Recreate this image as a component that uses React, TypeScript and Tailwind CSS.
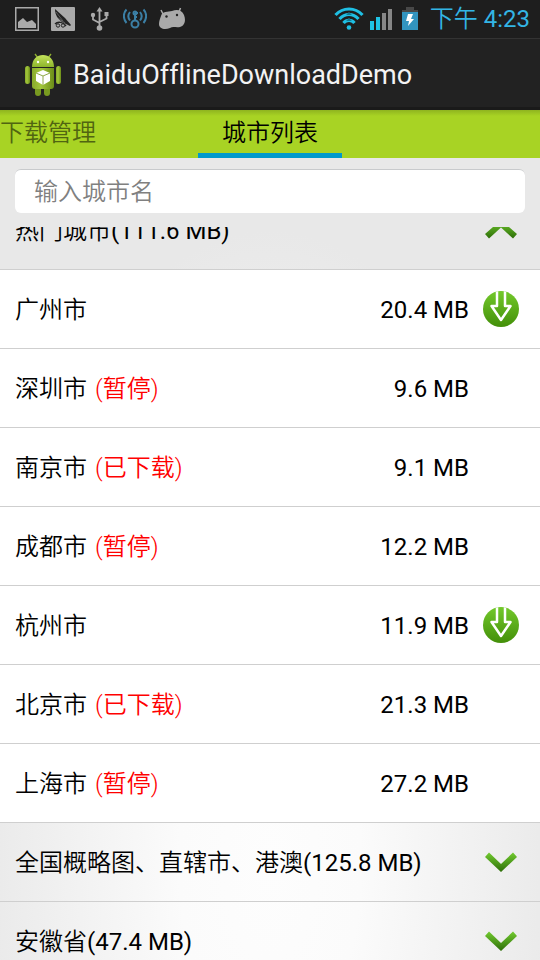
import { useState } from "react";

type City = { name: string; size: string; status?: string };

const cities: City[] = [
  { name: "广州市", size: "20.4 MB" },
  { name: "深圳市", size: "9.6 MB", status: "(暂停)" },
  { name: "南京市", size: "9.1 MB", status: "(已下载)" },
  { name: "成都市", size: "12.2 MB", status: "(暂停)" },
  { name: "杭州市", size: "11.9 MB" },
  { name: "北京市", size: "21.3 MB", status: "(已下载)" },
  { name: "上海市", size: "27.2 MB", status: "(暂停)" },
];

function NotificationIcons() {
  return (
    <div className="flex items-center gap-3" aria-hidden="true">
      <svg width="24" height="24" viewBox="0 0 24 24">
        <rect x="0.75" y="0.75" width="22.5" height="22.5" fill="none" stroke="#aaa" strokeWidth="1.5" />
        <path d="M3 21V15L8 11L12 15L17 13L21 17V21Z" fill="#aaa" />
      </svg>
      <svg width="24" height="24" viewBox="0 0 24 24">
        <rect width="24" height="24" rx="1" fill="#aaa" />
        <path d="M4 2C4 8 7 12 11 15L19 19L20 18L14 11Z" fill="#222" />
        <path d="M5 5L12 14M7 11L14 16" fill="none" stroke="#777" strokeWidth="0.7" />
        <path d="M4 17C7 14 12 15 15 19" fill="none" stroke="#222" strokeWidth="1.500" />
        <circle cx="7" cy="18.500" r="1.7" fill="#aaa" stroke="#222" />
        <circle cx="12" cy="18.500" r="1.7" fill="#aaa" stroke="#222" />
      </svg>
      <svg width="24" height="24" viewBox="0 0 24 24" fill="none" stroke="#aaa" strokeWidth="1.8">
        <path d="M12.500 3V20M6 9V12.500L12.500 16M19.500 7V11.500L12.500 15" />
        <path d="M12.500 0L15.500 4.500H9.500Z" fill="#aaa" stroke="none" />
        <circle cx="12.500" cy="21" r="2.800" fill="#aaa" stroke="none" />
        <circle cx="6" cy="8" r="2.200" fill="#aaa" stroke="none" />
        <rect x="17.500" y="5" width="4" height="4" fill="#aaa" stroke="none" />
      </svg>
      <svg width="24" height="24" viewBox="0 0 24 24" fill="none" stroke="#3b7fa5" strokeWidth="2">
        <circle cx="12" cy="17" r="3.500" />
        <path d="M12 14V6M12 6H15M12 10H14" />
        <circle cx="12" cy="6" r="1.500" />
        <path d="M7 5C5 7.500 5 11 7 13.500M17 5C19 7.500 19 11 17 13.500M3.500 2.500C0 6 0 12 3.500 16M20.500 2.500C24 6 24 12 20.500 16" />
      </svg>
      <svg width="26" height="24" viewBox="0 0 26 24">
        <path d="M2 3L4 7M21.500 1L20 5" stroke="#aaa" strokeWidth="1.500" />
        <path d="M2 9C3 4 9 5 13 4C18 2 23 3 25 8C27 13 26 19 21 20C17 21 14 19 11 21C6 23 0 22 0 17C0 14 1 12 2 9Z" fill="#aaa" />
        <circle cx="7.500" cy="9.500" r="1.200" fill="#222" />
        <circle cx="18" cy="8" r="1.200" fill="#222" />
      </svg>
    </div>
  );
}

function SystemIcons() {
  return (
    <div className="flex items-center" aria-hidden="true">
      <svg width="30" height="24" viewBox="0 0 30 24" fill="none" stroke="#1fbfe3" strokeWidth="3.200">
        <path d="M1.500 8C9 0 21 0 28.500 8" />
        <path d="M5.500 12C11 6 19 6 24.500 12" />
        <path d="M9.500 16C12.500 12.500 17.500 12.500 20.500 16" />
        <circle cx="15" cy="20.500" r="2.300" fill="#1fbfe3" stroke="none" />
        <path d="M15 5L12 8H18ZM15 11L12 14H18Z" fill="#107b94" stroke="none" />
      </svg>
      <svg className="ml-1.5" width="22" height="24" viewBox="0 0 22 24">
        <path d="M0 14H4V23H0ZM6 10H10V23H6Z" fill="#1fc4e6" />
        <path d="M12 6H16V23H12ZM18 2H22V23H18Z" fill="#868686" />
      </svg>
      <svg className="ml-2.5" width="16" height="24" viewBox="0 0 16 24">
        <path d="M0 3H4V0H12V3H16V6H0Z" fill="#484848" />
        <path d="M0 5H16V23H0Z" fill="#3294bf" />
        <path d="M6 7H11L9 12H12L6 19L7 14H4Z" fill="#fff" />
      </svg>
    </div>
  );
}

function AppIcon() {
  return (
    <svg width="36" height="44" viewBox="0 0 36 44" aria-hidden="true">
      <defs>
        <linearGradient id="body" x1="0" x2="1">
          <stop offset="0" stopColor="#88aa2b" />
          <stop offset="0.4" stopColor="#a3c73b" />
          <stop offset="1" stopColor="#6b8c18" />
        </linearGradient>
        <linearGradient id="head" x1="0" x2="0" y1="0" y2="1">
          <stop offset="0" stopColor="#c3e25c" />
          <stop offset="1" stopColor="#8db52b" />
        </linearGradient>
      </defs>
      <path d="M10 1L13 5M26 1L23 5" stroke="#8fb02f" strokeWidth="1.300" />
      <rect x="0" y="13" width="5" height="18" rx="2.5" fill="url(#body)" />
      <rect x="31" y="13" width="5" height="18" rx="2.5" fill="url(#body)" />
      <path d="M10 32H16V40Q16 43 13 43Q10 43 10 40ZM19 32H25V40Q25 43 22 43Q19 43 19 40Z" fill="#789a20" />
      <path d="M7 15H29V33Q29 36 26 36H10Q7 36 7 33Z" fill="url(#body)" />
      <path d="M7 14C7 6 12 2 18 2S29 6 29 14Z" fill="url(#head)" />
      <circle cx="13" cy="9" r="1.200" fill="#fff" />
      <circle cx="23" cy="9" r="1.200" fill="#fff" />
      <path d="M18 17L25 20V28L18 32L11 28V20Z" fill="#fff" />
      <path d="M11 20L18 23L25 20M18 23V32" fill="none" stroke="#91aa4a" strokeWidth="1" />
    </svg>
  );
}

function Chevron({ up = false }: { up?: boolean }) {
  return (
    <svg width="32" height="20" viewBox="0 0 32 20" aria-hidden="true">
      <defs>
        <linearGradient id="chevron" x1="0" x2="0" y1="0" y2="1">
          <stop offset="0" stopColor="#72cb30" />
          <stop offset="1" stopColor="#2d6d08" />
        </linearGradient>
      </defs>
      {up ? (
        <path d="M16 0L32 14L28 18.500L16 7.500L4 18.500L0 14Z" fill="url(#chevron)" />
      ) : (
        <path d="M16 20L0 5L4 0.500L16 12L28 0.500L32 5Z" fill="url(#chevron)" />
      )}
    </svg>
  );
}

function DownloadIcon() {
  return (
    <svg width="36" height="36" viewBox="0 0 36 36" aria-hidden="true">
      <defs>
        <linearGradient id="disc" x1="0" x2="0" y1="0" y2="1">
          <stop offset="0" stopColor="#73c92b" />
          <stop offset="1" stopColor="#438f09" />
        </linearGradient>
        <clipPath id="discEdge">
          <circle cx="18" cy="18" r="18" />
        </clipPath>
      </defs>
      <circle cx="18" cy="18" r="18" fill="url(#disc)" />
      <path
        d="M14 -2V15H8.500L18 29L27.500 15H22V-2"
        fill="none"
        stroke="#fff"
        strokeWidth="2.500"
        strokeLinejoin="round"
        clipPath="url(#discEdge)"
      />
    </svg>
  );
}

function GroupHeader({ title, size, open, onToggle }: { title: string; size: string; open: boolean; onToggle: () => void }) {
  return (
    <button
      type="button"
      aria-expanded={open}
      onClick={onToggle}
      className="flex h-[79px] w-full shrink-0 items-center justify-between border-b border-[#cfcfcf] pr-[23px] pl-[15px] text-left"
    >
      <span className="pt-0.5">
        {title}
        <span className="font-normal">{`(${size})`}</span>
      </span>
      <Chevron up={open} />
    </button>
  );
}

function CityRow({ city }: { city: City }) {
  return (
    <li className="flex h-[79px] items-center border-b border-[#cfcfcf] bg-white pr-[21px] pl-[15px]">
      <span className="pt-0.5">{city.name}</span>
      {city.status && <span className="ml-2 pt-0.5 text-[#ff0000]">{city.status}</span>}
      <span className="ml-auto pt-0.5 font-normal">{city.size}</span>
      <div className="ml-3.5 w-9">
        {!city.status && (
          <button type="button" aria-label={`下载 ${city.name}`} className="block">
            <DownloadIcon />
          </button>
        )}
      </div>
    </li>
  );
}

export default function App() {
  const [open, setOpen] = useState(true);
  const [query, setQuery] = useState("");

  return (
    <div className="flex h-screen flex-col overflow-hidden bg-[#e8e8e8] bg-[radial-gradient(ellipse_56%_66%_at_50%_90%,#fdfdfd_0%,#fbfbfb_30%,#e8e8e8_100%)] font-[Roboto,'Noto_Sans_CJK_SC',sans-serif] text-2xl font-[350] text-black">
      <div className="flex h-[39px] shrink-0 items-center justify-between border-b border-[#333] bg-[#1e1e1e] pr-2.5 pl-[15px]">
        <NotificationIcons />
        <div className="flex items-center gap-3 text-[#33b5e5]">
          <SystemIcons />
          <span>
            下午 <span className="font-normal">4:23</span>
          </span>
        </div>
      </div>
      <header className="flex h-[71px] shrink-0 items-center gap-3 border-b-3 border-[#1a1a1a] bg-[#222] pt-1 pl-[25px]">
        <AppIcon />
        <h1 className="pt-0.5 text-[27px] font-normal text-[#f3f3f3] [font-variant-ligatures:none]">
          BaiduOfflineDownloadDemo
        </h1>
      </header>
      <nav
        role="tablist"
        className="grid h-12 shrink-0 grid-cols-[1fr_auto_1fr] bg-[#a8d324] bg-[linear-gradient(#8fb41f,#a8d324_6px)]"
      >
        <button
          type="button"
          role="tab"
          aria-selected="false"
          className="justify-self-start border-b-3 border-transparent text-[#506511]"
        >
          下载管理
        </button>
        <button type="button" role="tab" aria-selected="true" className="border-b-5 border-[#0099cc] px-6 pt-0.5">
          城市列表
        </button>
      </nav>
      <div className="shrink-0 px-[15px] pt-[11px] pb-3.5">
        <input
          type="text"
          aria-label="输入城市名"
          placeholder="输入城市名"
          value={query}
          onChange={(event) => setQuery(event.target.value)}
          className="block h-11 w-full rounded-md border-t border-[#c8cacc] bg-white px-[19px] outline-none placeholder:text-[#808080]"
        />
      </div>
      <main className="min-h-0 flex-1 overflow-hidden">
        <div className="-mt-9 flex flex-col">
          <GroupHeader title="热门城市" size="111.6 MB" open={open} onToggle={() => setOpen(!open)} />
          {open && (
            <ul>
              {cities.map((city) => (
                <CityRow key={city.name} city={city} />
              ))}
            </ul>
          )}
          <GroupHeader title="全国概略图、直辖市、港澳" size="125.8 MB" open={false} onToggle={() => {}} />
          <GroupHeader title="安徽省" size="47.4 MB" open={false} onToggle={() => {}} />
        </div>
      </main>
    </div>
  );
}
